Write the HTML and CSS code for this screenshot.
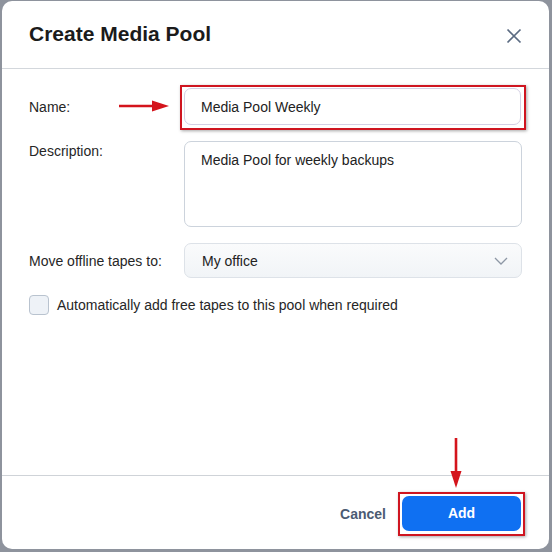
FILE: index.html
```html
<!DOCTYPE html>
<html>
<head>
<meta charset="utf-8">
<link rel="stylesheet" href="styles.css">
</head>
<body>
<div class="dialog">
  <div class="header">
    <h1 class="title">Create Media Pool</h1>
    <svg class="close" width="16" height="16" viewBox="0 0 16 16"><path d="M1.5 1.5 L14.5 14.5 M14.5 1.5 L1.5 14.5" stroke="#5b6b82" stroke-width="1.7" fill="none"/></svg>
  </div>
  <div class="content">
    <div class="row row-name">
      <label class="label">Name:</label>
      <div class="field input">Media Pool Weekly</div>
    </div>
    <div class="row row-desc">
      <label class="label label-top">Description:</label>
      <div class="field textarea">Media Pool for weekly backups</div>
    </div>
    <div class="row row-select">
      <label class="label">Move offline tapes to:</label>
      <div class="field select">
        <span>My office</span>
        <svg class="chevron" width="14" height="8" viewBox="0 0 14 8"><path d="M1 1 L7 7 L13 1" stroke="#8d97a5" stroke-width="1.3" fill="none"/></svg>
      </div>
    </div>
    <div class="check-row">
      <span class="checkbox"></span>
      <span class="check-label">Automatically add free tapes to this pool when required</span>
    </div>
  </div>
  <div class="footer">
    <button class="btn-cancel">Cancel</button>
    <button class="btn-add">Add</button>
  </div>

  <div class="mark mark-name"></div>
  <div class="mark mark-add"></div>
  <svg class="arrow arrow-name" width="52" height="14" viewBox="0 0 52 14"><path d="M0 7 L36 7" stroke="#d4141c" stroke-width="2.6"/><path d="M33 1.5 L50 7 L33 12.5 Z" fill="#d4141c"/></svg>
  <svg class="arrow arrow-add" width="14" height="52" viewBox="0 0 14 52"><path d="M7 0 L7 36" stroke="#d4141c" stroke-width="2.6"/><path d="M1.5 33 L7 50 L12.5 33 Z" fill="#d4141c"/></svg>
</div>
</body>
</html>
```
FILE: styles.css
```css
html, body {
  margin: 0;
  padding: 0;
}
body {
  background: #8e939d;
  width: 552px;
  height: 552px;
  padding: 1px 3px 3px 2px;
  box-sizing: border-box;
  font-family: "Liberation Sans", Arial, sans-serif;
  color: #222;
  overflow: hidden;
}
.dialog {
  position: relative;
  background: #fff;
  border-radius: 10px;
  height: 548px;
  display: flex;
  flex-direction: column;
}
.header {
  height: 67px;
  border-bottom: 1px solid #d3d7dc;
  display: flex;
  align-items: center;
  justify-content: space-between;
  padding: 0 27px 0 27px;
  flex: none;
}
.title {
  margin: 0;
  font-size: 21px;
  font-weight: bold;
  color: #1b1b1b;
  padding-bottom: 1px;
}
.close {
  display: block;
  margin-top: 2px;
}
.content {
  flex: 1;
  padding: 19px 28px 0 27px;
  display: flex;
  flex-direction: column;
}
.row {
  display: flex;
  align-items: center;
}
.label {
  width: 155px;
  flex: none;
  font-size: 14px;
  color: #262626;
}
.label-top {
  align-self: flex-start;
  padding-top: 2px;
}
.field {
  flex: 1;
  box-sizing: border-box;
  border: 1px solid #ccd3dc;
  border-radius: 7px;
  font-size: 14px;
  color: #222;
  padding: 0 16px;
}
.input {
  height: 37px;
  display: flex;
  align-items: center;
  border-color: #d4d0e4;
}
.row-desc {
  margin-top: 16px;
}
.textarea {
  height: 86px;
  padding-top: 10px;
  margin-right: -1px;
}
.row-select {
  margin-top: 16px;
}
.select {
  height: 35px;
  display: flex;
  align-items: center;
  justify-content: space-between;
  padding-left: 17px;
  padding-right: 13px;
  background: linear-gradient(#fafbfc, #f1f4f7);
  border-color: #dde2e8;
  margin-right: -1px;
}
.chevron {
  display: block;
}
.check-row {
  margin-top: 17px;
  display: flex;
  align-items: center;
}
.checkbox {
  width: 18px;
  height: 18px;
  border: 1px solid #b9c3cf;
  border-radius: 4px;
  background: #eef2f7;
  margin-right: 8px;
  flex: none;
}
.check-label {
  font-size: 14px;
  color: #262626;
}
.footer {
  flex: none;
  height: 73px;
  border-top: 1px solid #cfd3d8;
  display: flex;
  align-items: center;
  justify-content: flex-end;
  padding-right: 28px;
}
.btn-cancel {
  background: none;
  border: none;
  font-family: inherit;
  font-size: 14px;
  font-weight: bold;
  color: #4b5b73;
  padding: 0;
  margin-right: 16px;
  margin-top: 2px;
}
.btn-add {
  width: 119px;
  height: 35px;
  border: none;
  border-radius: 7px;
  background: #0f70f2;
  color: #fff;
  font-family: inherit;
  font-size: 14px;
  font-weight: bold;
  margin-top: 1px;
}
.mark {
  position: absolute;
  border: 2px solid #cf1520;
  box-shadow: 1px 1px 3px rgba(0,0,0,0.35);
  box-sizing: border-box;
}
.mark-name {
  left: 178px;
  top: 84px;
  width: 346px;
  height: 45px;
}
.mark-add {
  left: 396px;
  top: 491px;
  width: 127px;
  height: 44px;
}
.arrow {
  position: absolute;
  display: block;
}
.arrow-name {
  left: 117px;
  top: 98px;
}
.arrow-add {
  left: 447px;
  top: 437px;
}
```
